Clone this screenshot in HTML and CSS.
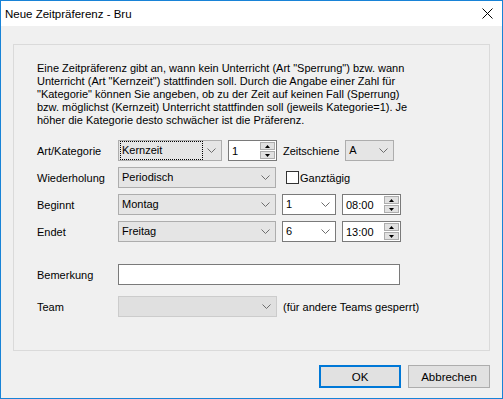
FILE: index.html
```html
<!DOCTYPE html>
<html lang="de">
<head>
    <meta charset="UTF-8">
    <title>Neue Zeitpräferenz - Bru</title>
    <link rel="stylesheet" href="styles.css">
</head>
<body>
    <div class="window">
        <div class="titlebar">
            <span class="title">Neue Zeitpräferenz - Bru</span>
            <svg class="close" width="11" height="11" viewBox="0 0 11 11">
                <path d="M0.5 0.5 L10.5 10.5 M10.5 0.5 L0.5 10.5" stroke="#000" stroke-width="1" fill="none"/>
            </svg>
        </div>
        <div class="client">
            <div class="panel">
                <p class="intro">
                    Eine Zeitpräferenz gibt an, wann kein Unterricht (Art "Sperrung") bzw. wann<br>
                    Unterricht (Art "Kernzeit") stattfinden soll. Durch die Angabe einer Zahl für<br>
                    "Kategorie" können Sie angeben, ob zu der Zeit auf keinen Fall (Sperrung)<br>
                    bzw. möglichst (Kernzeit) Unterricht stattfinden soll (jeweils Kategorie=1). Je<br>
                    höher die Kategorie desto schwächer ist die Präferenz.
                </p>

                <div class="rows">
                    <div class="row">
                        <span class="label">Art/Kategorie</span>
                        <div class="combo w-art">
                            <span class="value focused">Kernzeit</span>
                            <svg class="arrow" width="9" height="5" viewBox="0 0 9 5"><polyline points="0.5,0.5 4.5,4.5 8.5,0.5" fill="none" stroke="#6d6d6d"/></svg>
                        </div>
                        <div class="spin w-cat">
                            <span class="value">1</span>
                            <div class="spin-btns">
                                <span class="spin-btn"><svg width="7" height="4" viewBox="0 0 7 4"><polygon points="3.5,0 7,4 0,4" fill="#000"/></svg></span>
                                <span class="spin-btn"><svg width="7" height="4" viewBox="0 0 7 4"><polygon points="0,0 7,0 3.5,4" fill="#000"/></svg></span>
                            </div>
                        </div>
                        <span class="inline-label">Zeitschiene</span>
                        <div class="combo w-zs">
                            <span class="value">A</span>
                            <svg class="arrow" width="9" height="5" viewBox="0 0 9 5"><polyline points="0.5,0.5 4.5,4.5 8.5,0.5" fill="none" stroke="#6d6d6d"/></svg>
                        </div>
                    </div>

                    <div class="row">
                        <span class="label">Wiederholung</span>
                        <div class="combo w-wide">
                            <span class="value">Periodisch</span>
                            <svg class="arrow" width="9" height="5" viewBox="0 0 9 5"><polyline points="0.5,0.5 4.5,4.5 8.5,0.5" fill="none" stroke="#6d6d6d"/></svg>
                        </div>
                        <span class="check"></span>
                        <span class="check-label">Ganztägig</span>
                    </div>

                    <div class="row">
                        <span class="label">Beginnt</span>
                        <div class="combo w-wide">
                            <span class="value">Montag</span>
                            <svg class="arrow" width="9" height="5" viewBox="0 0 9 5"><polyline points="0.5,0.5 4.5,4.5 8.5,0.5" fill="none" stroke="#6d6d6d"/></svg>
                        </div>
                        <div class="combo edit w-num">
                            <span class="value">1</span>
                            <svg class="arrow" width="9" height="5" viewBox="0 0 9 5"><polyline points="0.5,0.5 4.5,4.5 8.5,0.5" fill="none" stroke="#6d6d6d"/></svg>
                        </div>
                        <div class="spin w-time">
                            <span class="value">08:00</span>
                            <div class="spin-btns">
                                <span class="spin-btn"><svg width="7" height="4" viewBox="0 0 7 4"><polygon points="3.5,0 7,4 0,4" fill="#000"/></svg></span>
                                <span class="spin-btn"><svg width="7" height="4" viewBox="0 0 7 4"><polygon points="0,0 7,0 3.5,4" fill="#000"/></svg></span>
                            </div>
                        </div>
                    </div>

                    <div class="row">
                        <span class="label">Endet</span>
                        <div class="combo w-wide">
                            <span class="value">Freitag</span>
                            <svg class="arrow" width="9" height="5" viewBox="0 0 9 5"><polyline points="0.5,0.5 4.5,4.5 8.5,0.5" fill="none" stroke="#6d6d6d"/></svg>
                        </div>
                        <div class="combo edit w-num">
                            <span class="value">6</span>
                            <svg class="arrow" width="9" height="5" viewBox="0 0 9 5"><polyline points="0.5,0.5 4.5,4.5 8.5,0.5" fill="none" stroke="#6d6d6d"/></svg>
                        </div>
                        <div class="spin w-time">
                            <span class="value">13:00</span>
                            <div class="spin-btns">
                                <span class="spin-btn"><svg width="7" height="4" viewBox="0 0 7 4"><polygon points="3.5,0 7,4 0,4" fill="#000"/></svg></span>
                                <span class="spin-btn"><svg width="7" height="4" viewBox="0 0 7 4"><polygon points="0,0 7,0 3.5,4" fill="#000"/></svg></span>
                            </div>
                        </div>
                    </div>
                </div>

                <div class="row row-note">
                    <span class="label">Bemerkung</span>
                    <div class="textbox"></div>
                </div>

                <div class="row row-team">
                    <span class="label">Team</span>
                    <div class="combo disabled w-team">
                        <span class="value"></span>
                        <svg class="arrow" width="9" height="5" viewBox="0 0 9 5"><polyline points="0.5,0.5 4.5,4.5 8.5,0.5" fill="none" stroke="#6d6d6d"/></svg>
                    </div>
                    <span class="inline-label">(für andere Teams gesperrt)</span>
                </div>
            </div>

            <div class="buttons">
                <button class="btn btn-default">OK</button>
                <button class="btn">Abbrechen</button>
            </div>
        </div>
    </div>
</body>
</html>
```

FILE: styles.css
```css
* {
    margin: 0;
    padding: 0;
    box-sizing: border-box;
}

body {
    font-family: 'Liberation Sans', Arial, sans-serif;
    font-size: 11px;
    color: #000;
    background: #fff;
}

.window {
    width: 503px;
    height: 399px;
    border: 1px solid #1883d7;
    display: flex;
    flex-direction: column;
    background: #f0f0f0;
}

.titlebar {
    height: 25px;
    background: #fff;
    display: flex;
    align-items: center;
    justify-content: space-between;
    padding: 0 9px 0 4px;
}

.title {
    font-size: 11.5px;
    color: #000;
}

.client {
    flex: 1;
    padding: 18px 12px 10px 12px;
    display: flex;
    flex-direction: column;
}

.panel {
    height: 307px;
    border: 1px solid #dadada;
    padding: 17px 0 0 23px;
}

.intro {
    line-height: 13px;
    white-space: nowrap;
    margin-bottom: 13px;
}

.rows {
    display: flex;
    flex-direction: column;
    gap: 6px;
}

.row {
    display: flex;
    align-items: center;
    height: 21px;
}

.label {
    width: 81px;
    flex-shrink: 0;
}

.row-note {
    margin-top: 22px;
}

.row-team {
    margin-top: 11px;
}

.combo {
    height: 21px;
    border: 1px solid #adadad;
    background: #e5e5e5;
    display: flex;
    align-items: center;
    justify-content: space-between;
    padding: 0 5px 0 2px;
    margin-right: 6px;
}

.combo .value {
    padding: 1px 1px;
    line-height: 15px;
    flex: 1;
}

.combo .value.focused {
    outline: 1px dotted #000;
    outline-offset: 0;
    margin-right: 5px;
}

.combo.edit {
    background: #fff;
    border-color: #7a7a7a;
}

.combo.disabled {
    background: #e0e0e0;
    border-color: #cccccc;
}

.w-art { width: 104px; }
.w-zs { width: 49px; }
.w-wide { width: 158px; }
.w-num { width: 54px; }
.w-team { width: 159px; }

.spin {
    height: 21px;
    border: 1px solid #7a7a7a;
    background: #fff;
    display: flex;
    align-items: center;
    justify-content: space-between;
    padding: 0 1px 0 3px;
    margin-right: 6px;
}

.w-cat { width: 49px; }
.w-time { width: 59px; }

.spin-btns {
    display: flex;
    flex-direction: column;
    gap: 1px;
}

.spin-btn {
    width: 15px;
    height: 8px;
    background: #e1e1e1;
    border: 1px solid #adadad;
    display: flex;
    align-items: center;
    justify-content: center;
}

.spin-btn svg {
    display: block;
    width: 5px;
    height: 3px;
}

.inline-label {
    margin-right: 6px;
}

.check {
    width: 13px;
    height: 13px;
    border: 1px solid #333;
    background: #fff;
    margin-left: 4px;
    margin-right: 1px;
}

.textbox {
    width: 282px;
    height: 21px;
    border: 1px solid #7a7a7a;
    background: #fff;
}

.buttons {
    display: flex;
    justify-content: flex-end;
    gap: 7px;
    margin-top: 14px;
}

.btn {
    font-family: inherit;
    font-size: 11.5px;
    color: #000;
    width: 82px;
    height: 23px;
    background: #e1e1e1;
    border: 1px solid #adadad;
}

.btn-default {
    border: 2px solid #0078d7;
}
```
